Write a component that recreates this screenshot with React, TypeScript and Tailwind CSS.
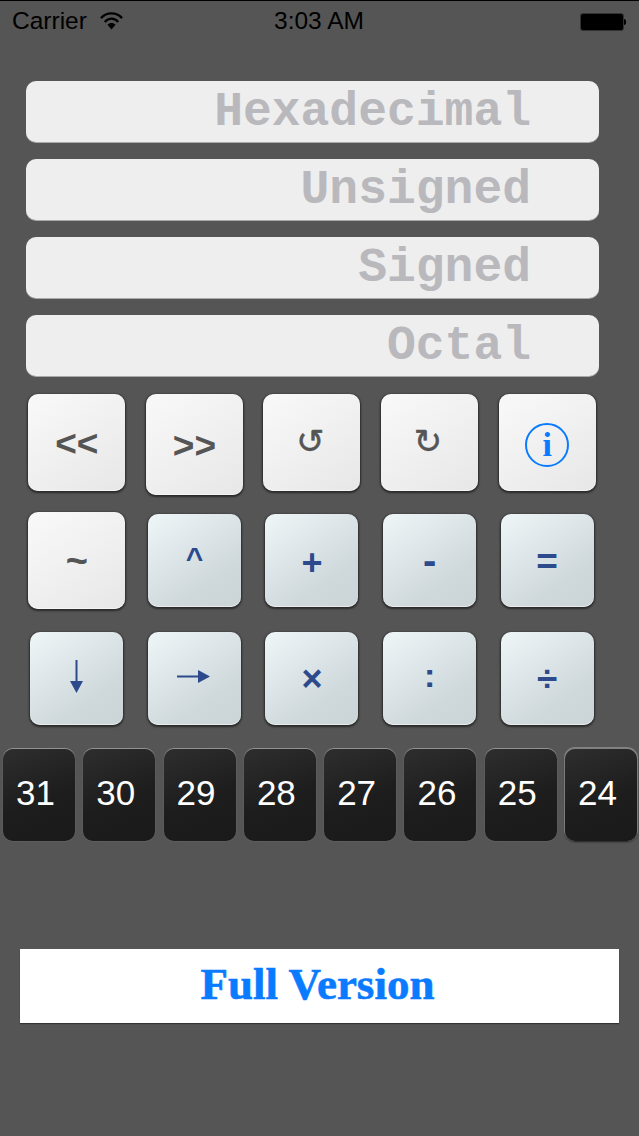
const lightKey = "bg-[linear-gradient(145deg,#f9f9f9_0%,#f1f1f1_45%,#e7e7e7_100%)] text-[#555555] shadow-[0_1px_2px_1px_rgba(0,0,0,0.5),inset_0_-1px_0_rgba(255,255,255,0.5)]";
const blueKey = "bg-[linear-gradient(145deg,#eef6f8_0%,#cfd8db_70%,#cbd4d7_100%)] text-[#2c4a8c] shadow-[0_1px_2px_1px_rgba(0,0,0,0.5),inset_0_-1px_0_rgba(255,255,255,0.5)]";
const keyFont = "font-['Liberation_Sans',sans-serif] font-bold";

const Field = ({ label }: { label: string }) => (
    <div className="h-[61px] rounded-[10px] bg-[#eeeeee] pr-[68px] text-right font-['Liberation_Mono',monospace] text-[48px] font-bold leading-[62px] text-[#b9b9bd] shadow-[0_1px_0_rgba(255,255,255,0.5)]">
        {label}
    </div>
)

const BitKey = ({ value, last }: { value: number, last?: boolean }) => (
    <div className={`flex h-[92px] w-[72px] items-center justify-center rounded-[10px] bg-[linear-gradient(160deg,#2e2e2e_0%,#1d1d1d_55%,#1a1a1a_100%)] pb-[3px] pr-[7px] font-['Liberation_Sans',sans-serif] text-[35px] text-white ${last ? "shadow-[0_-1px_0_1px_rgba(160,160,160,0.6),0_1px_2px_rgba(0,0,0,0.6)]" : "shadow-[0_-1px_0_rgba(170,170,170,0.7),0_0_0_1px_rgba(100,100,100,0.4)]"}`}>
        {value}
    </div>
)

export default function App() {
    return (
        <main className="flex h-[1136px] w-[639px] flex-col overflow-hidden border-t border-black bg-[#555555]">
            <header className="grid h-[42px] grid-cols-3 items-center pb-[1px] pl-[12px] pr-[13px] font-['Liberation_Sans',sans-serif] text-[24.5px] leading-none text-black">
                <div className="flex items-center gap-[13px]">
                    <span>Carrier</span>
                    <svg width="23" height="19" viewBox="0 0 24 19" className="mb-[3px]">
                        <path d="M1 7 C7 0.5 17 0.5 23 7" fill="none" stroke="#000" strokeWidth="2.4" />
                        <path d="M5 11 C9 6.5 15 6.5 19 11" fill="none" stroke="#000" strokeWidth="2.4" />
                        <path d="M12 19 L7.8 14 C10 11.6 14 11.6 16.2 14 Z" fill="#000" />
                    </svg>
                </div>
                <span className="text-center">3:03 AM</span>
                <div className="flex items-center justify-end">
                    <div className="h-[18px] w-[44px] rounded-[3px] border border-[#333333] bg-black" />
                    <div className="h-[6px] w-[2px] rounded-r-full bg-black" />
                </div>
            </header>

            <section className="mt-[38px] flex flex-col gap-[17px] pl-[26px] pr-[40px]">
                <Field label="Hexadecimal" />
                <Field label="Unsigned" />
                <Field label="Signed" />
                <Field label="Octal" />
            </section>

            <section className={`mt-[7px] grid grid-cols-[repeat(5,117.6px)] grid-rows-[repeat(3,118px)] place-items-center pl-[18px] ${keyFont}`}>
                <div className={`flex size-[97px] items-center justify-center rounded-[10px] pt-[4px] text-[37px] ${lightKey}`}>{"<<"}</div>
                <div className={`mt-[4px] flex h-[101px] w-[97px] items-center justify-center rounded-[10px] pt-[4px] text-[37px] ${lightKey}`}>{">>"}</div>
                <div className={`flex size-[97px] items-center justify-center rounded-[10px] pb-[2px] pr-[3px] font-['DejaVu_Sans',sans-serif] text-[34px] font-normal [-webkit-text-stroke:0.5px_#555555] ${lightKey}`}>↺</div>
                <div className={`flex size-[97px] items-center justify-center rounded-[10px] pb-[2px] pr-[3px] font-['DejaVu_Sans',sans-serif] text-[34px] font-normal [-webkit-text-stroke:0.5px_#555555] ${lightKey}`}>↻</div>
                <div className={`flex size-[97px] items-center justify-center rounded-[10px] pt-[5px] ${lightKey}`}>
                    <div className="flex size-[44px] items-center justify-center rounded-full border-2 border-[#0a7bff] font-['Liberation_Serif',serif] text-[34px] font-bold leading-none text-[#0a7bff]">i</div>
                </div>

                <div className={`flex size-[97px] items-center justify-center rounded-[10px] pt-[3px] text-[38px] ${lightKey}`}>~</div>
                <div className={`flex size-[93px] items-center justify-center rounded-[10px] pb-[5px] text-[30px] ${blueKey}`}>^</div>
                <div className={`flex size-[93px] items-center justify-center rounded-[10px] pt-[6px] text-[36px] ${blueKey}`}>+</div>
                <div className={`flex size-[93px] items-center justify-center rounded-[10px] text-[40px] ${blueKey}`}>-</div>
                <div className={`flex size-[93px] items-center justify-center rounded-[10px] pt-[4px] text-[37px] ${blueKey}`}>=</div>

                <div className={`flex size-[93px] items-center justify-center rounded-[10px] pb-[4px] ${blueKey}`}>
                    <svg width="13" height="33" viewBox="0 0 13 33" fill="#2c4a8c">
                        <rect x="5.5" y="0" width="2" height="24" />
                        <path d="M0 21 H13 L6.5 33 Z" />
                    </svg>
                </div>
                <div className={`flex size-[93px] items-center justify-center rounded-[10px] pb-[3px] pr-[2px] ${blueKey}`}>
                    <svg width="33" height="13" viewBox="0 0 33 13" fill="#2c4a8c">
                        <rect x="0" y="5.5" width="24" height="2" />
                        <path d="M21 0 V13 L33 6.5 Z" />
                    </svg>
                </div>
                <div className={`flex size-[93px] items-center justify-center rounded-[10px] pt-[2px] text-[36px] ${blueKey}`}>×</div>
                <div className={`flex size-[93px] items-center justify-center rounded-[10px] pb-[6px] text-[34px] ${blueKey}`}>:</div>
                <div className={`flex size-[93px] items-center justify-center rounded-[10px] pt-[2px] text-[37px] ${blueKey}`}>÷</div>
            </section>

            <section className="mt-[12px] flex justify-between pl-[3px] pr-[2px]">
                {[31, 30, 29, 28, 27, 26, 25].map((n) => <BitKey key={n} value={n} />)}
                <BitKey value={24} last />
            </section>

            <button className="mx-[20px] mt-[108px] h-[74px] bg-white pb-[2px] pr-[4px] text-center font-['Liberation_Serif',serif] text-[45px] font-bold text-[#0a7bff] shadow-[0_1px_1px_rgba(0,0,0,0.4)] [-webkit-text-stroke:0.6px_#0a7bff]">
                Full Version
            </button>
        </main>
    )
}
